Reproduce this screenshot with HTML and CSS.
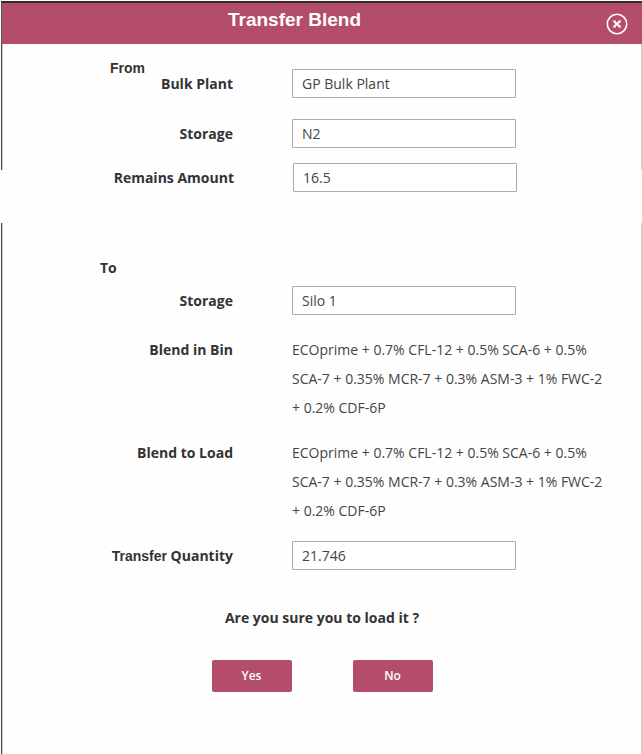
FILE: index.html
```html
<!DOCTYPE html>
<html lang="en">
<head>
<meta charset="utf-8">
<title>Transfer Blend</title>
<link rel="stylesheet" href="styles.css">
</head>
<body>
<form class="dialog">
  <header class="dialog-header">
    <h1 class="dialog-title">Transfer Blend</h1>
    <button class="close" type="button" aria-label="Close">
      <svg width="22" height="22" viewBox="0 0 22 22" fill="none" stroke="currentColor" aria-hidden="true">
        <circle cx="11" cy="11" r="9.7" stroke-width="1.6"/>
        <path d="M8 8.2L14 13.8M14 8.2L8 13.8" stroke-width="2"/>
        <path d="M6.8 8H9.6M12.4 8H15.2M6.8 14H9.6M12.4 14H15.2" stroke-width="1"/>
      </svg>
    </button>
  </header>

  <section class="panel panel-from">
    <h2 class="group-title group-title-from">From</h2>
    <div class="row">
      <label class="label" for="plant">Bulk Plant</label>
      <input class="field" id="plant" type="text" value="GP Bulk Plant">
    </div>
    <div class="row">
      <label class="label" for="from-storage">Storage</label>
      <input class="field" id="from-storage" type="text" value="N2">
    </div>
  </section>

  <section class="remains">
    <div class="row">
      <label class="label" for="remains">Remains Amount</label>
      <input class="field" id="remains" type="text" value="16.5">
    </div>
  </section>

  <section class="panel panel-to">
    <h2 class="group-title">To</h2>
    <div class="row">
      <label class="label" for="to-storage">Storage</label>
      <input class="field" id="to-storage" type="text" value="Silo 1">
    </div>
    <div class="blends">
      <div class="row">
        <span class="label">Blend in Bin</span>
        <p class="blend">ECOprime + 0.7% CFL-12 + 0.5% SCA-6 + 0.5% SCA-7 + 0.35% MCR-7 + 0.3% ASM-3 + 1% FWC-2 + 0.2% CDF-6P</p>
      </div>
      <div class="row">
        <span class="label">Blend to Load</span>
        <p class="blend">ECOprime + 0.7% CFL-12 + 0.5% SCA-6 + 0.5% SCA-7 + 0.35% MCR-7 + 0.3% ASM-3 + 1% FWC-2 + 0.2% CDF-6P</p>
      </div>
      <div class="row">
        <label class="label" for="quantity"><span class="alt">Transfer</span> Quantity</label>
        <input class="field" id="quantity" type="text" value="21.746">
      </div>
    </div>
    <p class="question">Are you sure you to load it ?</p>
    <div class="actions">
      <button class="button" type="submit">Yes</button>
      <button class="button" type="button">No</button>
    </div>
  </section>
</form>
</body>
</html>
```
FILE: styles.css
```css
* {
  box-sizing: border-box;
}

body {
  margin: 0;
  background: #fefefe;
  color: #333;
  font: 14px/29px "Open Sans", "Noto Sans", sans-serif;
}

h1, h2, p {
  margin: 0;
}

.dialog {
  display: flex;
  flex-direction: column;
  min-height: 100vh;
  padding: 1px 0 0 1px;
}

.dialog-header {
  display: flex;
  align-items: center;
  height: 43px;
  padding: 0 14px 0 226px;
  background: #b34d6a;
  border-top: 2px solid #302a30;
  border-left: 1px solid #555;
  color: #fff;
}

.dialog-title {
  flex: 1;
  padding-bottom: 8px;
  font: bold 19px/24px "Liberation Sans", Arial, sans-serif;
}

.close {
  display: flex;
  padding: 0;
  border: 0;
  background: none;
  color: inherit;
}

.panel {
  border: solid #d0d0d0;
  border-width: 0 1px 0 1px;
  box-shadow: -1px 0 #444;
  margin-left: 1px;
}

.panel-from {
  padding: 14px 0 22px;
}

.remains {
  margin-top: -7px;
  padding: 0 0 31px 3px;
}

.panel-to {
  flex: 1;
  padding-top: 35px;
}

.group-title {
  padding-left: 97px;
  margin-bottom: 8px;
  font-size: 14px;
  line-height: 20px;
}

.group-title-from {
  padding-left: 107px;
  margin-bottom: -9px;
  font-family: "Liberation Sans", Arial, sans-serif;
}

.row {
  display: grid;
  grid-template-columns: 2fr 3fr;
  column-gap: 59px;
  align-items: start;
  padding-right: 4px;
}

.row + .row {
  margin-top: 21px;
}

.label {
  text-align: right;
  font-weight: bold;
}

.alt {
  font-family: "Liberation Sans", Arial, sans-serif;
}

.field {
  width: 65%;
  height: 29px;
  padding: 0 9px;
  border: 1px solid #aaa;
  border-radius: 1px;
  background: #fff;
  color: #444;
  font: inherit;
}

.blends {
  margin-top: 20px;
}

.blends .row + .row {
  margin-top: 16px;
}

.blend {
  padding-right: 26px;
  color: #444;
}

.question {
  margin-top: 37px;
  line-height: 20px;
  font-weight: bold;
  text-align: center;
}

.actions {
  display: flex;
  justify-content: center;
  gap: 61px;
  margin-top: 32px;
}

.button {
  width: 80px;
  height: 32px;
  padding: 0;
  border: 0;
  border-radius: 2px;
  background: #b34d6a;
  color: #fff;
  font: 600 12px/32px "Open Sans", "Noto Sans", sans-serif;
}
```
